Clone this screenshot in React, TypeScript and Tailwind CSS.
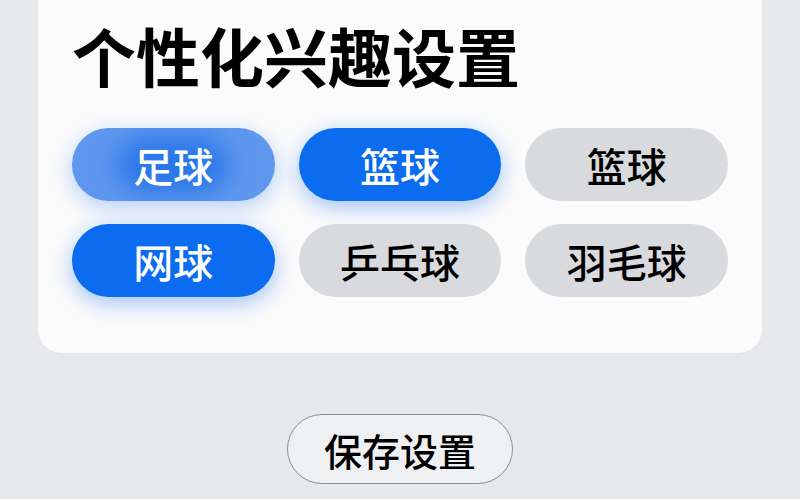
import React from "react";

const font = { fontFamily: '"Noto Sans CJK SC", "Noto Sans", sans-serif' };

type Tag = { label: string; state: "hover" | "on" | "off" };

const tags: Tag[] = [
  { label: "足球", state: "hover" },
  { label: "篮球", state: "on" },
  { label: "篮球", state: "off" },
  { label: "网球", state: "on" },
  { label: "乒乓球", state: "off" },
  { label: "羽毛球", state: "off" },
];

const Pill = ({ label, state }: Tag) => {
  if (state === "hover") {
    return (
      <button className="relative h-[73px] rounded-full overflow-hidden bg-[#5f97ee] text-white text-[40px] font-medium shadow-[0_6px_22px_rgba(40,120,240,0.35)]">
        <span className="absolute left-1/2 top-1/2 -translate-x-1/2 -translate-y-1/2 w-[110px] h-[56px] rounded-full bg-[#2a77ea] blur-[12px]"></span>
        <span className="relative">{label}</span>
      </button>
    );
  }
  if (state === "on") {
    return (
      <button className="h-[73px] rounded-full bg-[#0b6cf0] text-white text-[40px] font-medium shadow-[0_6px_22px_rgba(20,110,240,0.4)]">
        {label}
      </button>
    );
  }
  return (
    <button className="h-[73px] rounded-full bg-[#d9dadd] text-black text-[40px] font-medium">
      {label}
    </button>
  );
};

export default function App() {
  return (
    <div className="w-[800px] h-[499px] overflow-hidden bg-[#e7e8eb] flex flex-col items-center" style={font}>
      <div className="w-[724px] -mt-6 bg-[#fbfbfb] rounded-[24px] pt-[46px] px-[34px] pb-[56px]">
        <h1 className="text-[64px] font-bold leading-none text-black">个性化兴趣设置</h1>
        <div className="mt-[42px] grid grid-cols-3 gap-x-[24px] gap-y-[23px]">
          {tags.map((t, i) => (
            <Pill key={i} {...t} />
          ))}
        </div>
      </div>
      <button className="mt-[61px] w-[226px] h-[70px] rounded-full border-[1.5px] border-[#8e8f94] bg-[#eff0f2] text-[38px] font-medium text-black">
        保存设置
      </button>
    </div>
  );
}
